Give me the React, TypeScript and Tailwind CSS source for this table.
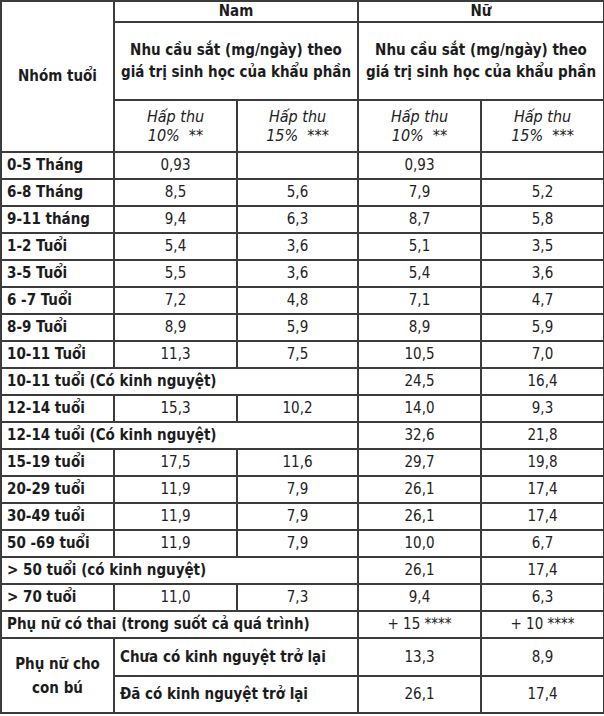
import React from "react";

type Row =
  | { kind: "normal"; label: string; m10: string; m15: string; f10: string; f15: string }
  | { kind: "span"; label: string; f10: string; f15: string };

const rows: Row[] = [
  { kind: "normal", label: "0-5 Tháng", m10: "0,93", m15: "", f10: "0,93", f15: "" },
  { kind: "normal", label: "6-8 Tháng", m10: "8,5", m15: "5,6", f10: "7,9", f15: "5,2" },
  { kind: "normal", label: "9-11 tháng", m10: "9,4", m15: "6,3", f10: "8,7", f15: "5,8" },
  { kind: "normal", label: "1-2 Tuổi", m10: "5,4", m15: "3,6", f10: "5,1", f15: "3,5" },
  { kind: "normal", label: "3-5 Tuổi", m10: "5,5", m15: "3,6", f10: "5,4", f15: "3,6" },
  { kind: "normal", label: "6 -7 Tuổi", m10: "7,2", m15: "4,8", f10: "7,1", f15: "4,7" },
  { kind: "normal", label: "8-9 Tuổi", m10: "8,9", m15: "5,9", f10: "8,9", f15: "5,9" },
  { kind: "normal", label: "10-11 Tuổi", m10: "11,3", m15: "7,5", f10: "10,5", f15: "7,0" },
  { kind: "span", label: "10-11 tuổi (Có kinh nguyệt)", f10: "24,5", f15: "16,4" },
  { kind: "normal", label: "12-14 tuổi", m10: "15,3", m15: "10,2", f10: "14,0", f15: "9,3" },
  { kind: "span", label: "12-14 tuổi (Có kinh nguyệt)", f10: "32,6", f15: "21,8" },
  { kind: "normal", label: "15-19 tuổi", m10: "17,5", m15: "11,6", f10: "29,7", f15: "19,8" },
  { kind: "normal", label: "20-29 tuổi", m10: "11,9", m15: "7,9", f10: "26,1", f15: "17,4" },
  { kind: "normal", label: "30-49 tuổi", m10: "11,9", m15: "7,9", f10: "26,1", f15: "17,4" },
  { kind: "normal", label: "50 -69 tuổi", m10: "11,9", m15: "7,9", f10: "10,0", f15: "6,7" },
  { kind: "span", label: "> 50 tuổi (có kinh nguyệt)", f10: "26,1", f15: "17,4" },
  { kind: "normal", label: "> 70 tuổi", m10: "11,0", m15: "7,3", f10: "9,4", f15: "6,3" },
  { kind: "span", label: "Phụ nữ có thai (trong suốt cả quá trình)", f10: "+ 15 ****", f15: "+ 10 ****" },
];

const bd = "border-2 border-[#3c3c3c] p-0";
const lab = `${bd} px-[5px] text-left font-bold text-[#1c1c1c]`;
const val = `${bd} text-center text-[#222]`;
const hd = `${bd} text-center font-bold text-[#1c1c1c]`;

export default function App() {
  return (
    <div
      className="w-[604px] h-[716px] bg-white"
      style={{ fontFamily: '"DejaVu Sans Condensed", "DejaVu Sans", Tahoma, sans-serif' }}
    >
      <table className="w-[603px] table-fixed border-collapse text-[15px] leading-[19px]">
        <colgroup>
          <col className="w-[113px]" />
          <col className="w-[123px]" />
          <col className="w-[121px]" />
          <col className="w-[123px]" />
          <col className="w-[123px]" />
        </colgroup>
        <tbody>
          <tr className="h-[21px]">
            <td rowSpan={3} className={hd}>
              Nhóm tuổi
            </td>
            <td colSpan={2} className={`${hd} h-[21px] leading-[17px]`}>
              Nam
            </td>
            <td colSpan={2} className={`${hd} h-[21px] leading-[17px]`}>
              Nữ
            </td>
          </tr>
          <tr className="h-[78px]">
            <td colSpan={2} className={`${hd} h-[78px] leading-[22px]`}>
              Nhu cầu sắt (mg/ngày) theo
              <br />
              giá trị sinh học của khẩu phần
            </td>
            <td colSpan={2} className={`${hd} h-[78px] leading-[22px]`}>
              Nhu cầu sắt (mg/ngày) theo
              <br />
              giá trị sinh học của khẩu phần
            </td>
          </tr>
          <tr className="h-[52px]">
            <td className={`${val} h-[52px] italic text-[16px]`}>
              Hấp thu
              <br />
              10% &nbsp;**
            </td>
            <td className={`${val} italic text-[16px]`}>
              Hấp thu
              <br />
              15% &nbsp;***
            </td>
            <td className={`${val} italic text-[16px]`}>
              Hấp thu
              <br />
              10% &nbsp;**
            </td>
            <td className={`${val} italic text-[16px]`}>
              Hấp thu
              <br />
              15% &nbsp;***
            </td>
          </tr>
          {rows.map((r, i) =>
            r.kind === "normal" ? (
              <tr key={i} className="h-[27px]">
                <td className={`${lab} h-[27px]`}>{r.label}</td>
                <td className={val}>{r.m10}</td>
                <td className={val}>{r.m15}</td>
                <td className={val}>{r.f10}</td>
                <td className={val}>{r.f15}</td>
              </tr>
            ) : (
              <tr key={i} className="h-[27px]">
                <td colSpan={3} className={`${lab} h-[27px] whitespace-nowrap`}>
                  {r.label}
                </td>
                <td className={val}>{r.f10}</td>
                <td className={val}>{r.f15}</td>
              </tr>
            )
          )}
          <tr className="h-[38px]">
            <td rowSpan={2} className={`${hd} leading-[24px]`}>
              Phụ nữ cho
              <br />
              con bú
            </td>
            <td colSpan={2} className={`${lab} h-[38px]`}>
              Chưa có kinh nguyệt trở lại
            </td>
            <td className={val}>13,3</td>
            <td className={val}>8,9</td>
          </tr>
          <tr className="h-[37px]">
            <td colSpan={2} className={`${lab} h-[37px]`}>
              Đã có kinh nguyệt trở lại
            </td>
            <td className={val}>26,1</td>
            <td className={val}>17,4</td>
          </tr>
        </tbody>
      </table>
    </div>
  );
}
